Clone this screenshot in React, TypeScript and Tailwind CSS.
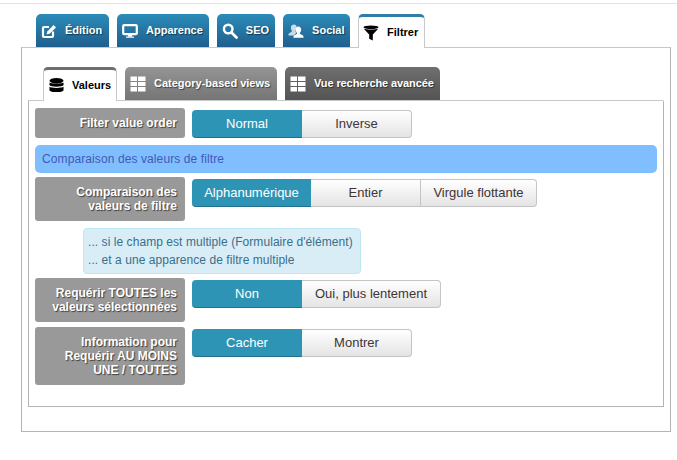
import type { ReactNode } from 'react';

function EditIcon() {
  return (
    <svg viewBox="0 0 16 16" className="h-[16px] w-[16px] shrink-0">
      <path d="M12 8.500V13a1 1 0 0 1-1 1H3a1 1 0 0 1-1-1V5a1 1 0 0 1 1-1h5" fill="none" stroke="currentColor" strokeWidth="2.2" />
      <path d="M5.500 11.500l.8-3L12.600 2l2.400 2.400-6.400 6.400z" fill="currentColor" />
    </svg>
  );
}

function MonitorIcon() {
  return (
    <svg viewBox="0 0 16 16" className="h-[16px] w-[16px] shrink-0">
      <rect x="1.200" y="2.200" width="13.600" height="9" rx="1" fill="none" stroke="currentColor" strokeWidth="2.2" />
      <rect x="6" y="12" width="4" height="1.600" fill="currentColor" />
      <rect x="4" y="13.400" width="8" height="1.400" rx="0.5" fill="currentColor" />
    </svg>
  );
}

function SearchIcon() {
  return (
    <svg viewBox="0 0 16 16" className="h-[16px] w-[16px] shrink-0">
      <circle cx="6.200" cy="6" r="4.300" fill="none" stroke="currentColor" strokeWidth="2.4" />
      <path d="M9.500 9.500l5 5" fill="none" stroke="currentColor" strokeWidth="2.8" strokeLinecap="round" />
    </svg>
  );
}

function SocialIcon() {
  return (
    <svg viewBox="0 0 16 16" className="h-[16px] w-[16px] shrink-0">
      <path d="M6 1.500c1.600 0 2.700 1.300 2.700 3 0 1.200-.5 2.300-1.200 2.900v1l1.400.7-3 3.400H.5v-1.400c0-1 2.800-1.800 3.300-2.700v-1C3.100 6.800 2.900 5.700 2.900 4.500c0-1.700 1.500-3 3.100-3z" fill="currentColor" opacity="0.75" />
      <path d="M10.300 3.500c1.700 0 2.900 1.400 2.900 3.100 0 1.200-.5 2.300-1.200 3v1.200c.6.9 3.500 1.300 3.500 2.600v1.300H5.500v-1.300c0-1.300 2.900-1.700 3.500-2.600V9.600c-.8-.7-1.300-1.800-1.300-3 0-1.700 1-3.100 2.600-3.100z" fill="currentColor" />
    </svg>
  );
}

function FilterIcon() {
  return (
    <svg viewBox="0 0 16 16" className="h-[16px] w-[16px] shrink-0">
      <ellipse cx="8" cy="2.200" rx="7.500" ry="1.700" fill="currentColor" />
      <path d="M0.800 3.800c1.500 1 13 1 14.400 0L9.800 9.600v5.800l-3.600-1.600V9.600z" fill="currentColor" />
    </svg>
  );
}

function DatabaseIcon() {
  return (
    <svg viewBox="0 0 16 16" className="h-[15px] w-[15px] shrink-0">
      <ellipse cx="8" cy="3" rx="7.500" ry="3" fill="currentColor" />
      <path d="M0.500 4.800c1.200 1.600 13.800 1.600 15 0v3c-1.200 2-13.800 2-15 0z" fill="currentColor" />
      <path d="M0.500 9.400c1.200 1.600 13.800 1.600 15 0V13c-1 2.700-14 2.700-15 0z" fill="currentColor" />
    </svg>
  );
}

function GridIcon() {
  return (
    <svg viewBox="0 0 16 16" className="h-[16px] w-[16px] shrink-0">
      <rect x="0.500" y="0.500" width="6.500" height="4.500" fill="currentColor" />
      <rect x="8" y="0.500" width="7.500" height="4.500" fill="currentColor" />
      <rect x="0.500" y="6" width="6.500" height="4" fill="currentColor" />
      <rect x="8" y="6" width="7.500" height="4" fill="currentColor" />
      <rect x="0.500" y="11" width="6.500" height="4.500" fill="currentColor" />
      <rect x="8" y="11" width="7.500" height="4.500" fill="currentColor" />
    </svg>
  );
}

function MainTab({ icon, label, active, className = '' }: { icon: ReactNode; label: string; active?: boolean; className?: string }) {
  return (
    <div
      className={
        active
          ? `relative z-10 -mb-px flex h-[34px] items-center gap-[8px] rounded-t-[5px] border border-b-0 border-[#c8c8c8] border-t-[3px] border-t-[#2f7ea8] bg-white pl-[4px] pr-[6px] text-black ${className}`
          : `flex h-[33px] items-center gap-[8px] rounded-t-[5px] bg-gradient-to-b from-[#2b8cb8] to-[#1f5f8e] pl-[5px] pr-[6px] text-white [text-shadow:1px_1px_1px_rgba(0,0,0,0.5)] ${className}`
      }
    >
      {icon}
      <span className="text-[11px] font-bold">{label}</span>
    </div>
  );
}

function SubTab({ icon, label, tone }: { icon: ReactNode; label: string; tone: 'active' | 'light' | 'dark' }) {
  const cls = {
    active: 'relative z-10 -mb-px h-[34px] w-[74px] border border-b-0 border-[#c8c8c8] border-t-[3px] border-t-[#6e6e6e] bg-white pl-[5px] text-black',
    light: 'h-[33px] w-[152px] bg-gradient-to-b from-[#959595] to-[#757575] pl-[5px] text-white [text-shadow:1px_1px_1px_rgba(0,0,0,0.5)]',
    dark: 'h-[33px] w-[155px] bg-gradient-to-b from-[#6f6f6f] to-[#545454] pl-[5px] tracking-[-0.1px] text-white [text-shadow:1px_1px_1px_rgba(0,0,0,0.5)]',
  }[tone];
  return (
    <div className={`flex items-center gap-[8px] rounded-t-[5px] ${cls}`}>
      {icon}
      <span className="text-[11px] font-bold">{label}</span>
    </div>
  );
}

function Label({ children, h }: { children: ReactNode; h: string }) {
  return (
    <div
      className={`${h} w-[150px] shrink-0 rounded-[3px] bg-[#999999] pr-[8px] pt-[8px] text-right text-[12px] font-bold leading-[14px] text-white [text-shadow:1px_1px_1px_rgba(0,0,0,0.6)]`}
    >
      {children}
    </div>
  );
}

function Toggle({ options, widths }: { options: string[]; widths: string[] }) {
  return (
    <div className="mt-[2px] flex h-[28px]">
      {options.map((o, i) => (
        <div
          key={o}
          className={
            i === 0
              ? `${widths[i]} flex items-center justify-center rounded-l-[4px] border-b border-[#22708c] bg-[#2e94b5] text-[13px] text-white`
              : `${widths[i]} flex items-center justify-center border border-l-0 border-[#c4c4c4] bg-gradient-to-b from-white to-[#e4e4e4] text-[13px] text-[#3f3535] ${i === options.length - 1 ? 'rounded-r-[4px]' : ''}`
          }
        >
          {o}
        </div>
      ))}
    </div>
  );
}

function Row({ label, h, options, widths, className = '' }: { label: ReactNode; h: string; options: string[]; widths: string[]; className?: string }) {
  return (
    <div className={`flex gap-[7px] ${className}`}>
      <Label h={h}>{label}</Label>
      <Toggle options={options} widths={widths} />
    </div>
  );
}

export default function App() {
  return (
    <div className="h-[460px] w-[677px] overflow-hidden bg-white pt-[3px] font-['Liberation_Sans',Arial,sans-serif]">
      <div className="h-px bg-[#e2e2e2]" />
      <div className="ml-[21px] mr-[6px] mt-[10px]">
        <div className="flex h-[33px] gap-[8px] pl-[15px]">
          <MainTab icon={<EditIcon />} label="Édition" className="w-[73px]" />
          <MainTab icon={<MonitorIcon />} label="Apparence" />
          <MainTab icon={<SearchIcon />} label="SEO" />
          <MainTab icon={<SocialIcon />} label="Social" className="w-[67px]" />
          <MainTab icon={<FilterIcon />} label="Filtrer" active />
        </div>
        <div className="h-[385px] border border-[#b4b4b4] border-t-[#c8c8c8] px-[6px] pt-[19px]">
          <div className="flex h-[33px] gap-[8px] pl-[15px]">
            <SubTab tone="active" icon={<DatabaseIcon />} label="Valeurs" />
            <SubTab tone="light" icon={<GridIcon />} label="Category-based views" />
            <SubTab tone="dark" icon={<GridIcon />} label="Vue recherche avancée" />
          </div>
          <div className="flex h-[307px] flex-col gap-[4px] rounded-tr-[2px] border border-[#b4b4b4] border-t-[#c8c8c8] px-[6px] pt-[7px]">
            <Row label="Filter value order" h="h-[30px]" options={['Normal', 'Inverse']} widths={['w-[110px]', 'w-[110px]']} />
            <div className="mt-[3px] flex h-[28px] shrink-0 items-center rounded-[5px] bg-[#7fbfff] px-[7px] text-[12px] tracking-[0.1px] text-[#4558b8]">
              Comparaison des valeurs de filtre
            </div>
            <Row
              label={<>Comparaison des<br />valeurs de filtre</>}
              h="h-[44px]"
              options={['Alphanumérique', 'Entier', 'Virgule flottante']}
              widths={['w-[119px]', 'w-[110px]', 'w-[116px]']}
            />
            <div className="ml-[48px] mt-[3px] flex h-[46px] w-[278px] shrink-0 flex-col justify-center rounded-[4px] border border-[#bce8f1] bg-[#d9edf7] px-[4px] text-[12px] leading-[18px] tracking-[0.06px] text-[#3a6f8a]">
              <div>... si le champ est multiple (Formulaire d'élément)</div>
              <div>... et a une apparence de filtre multiple</div>
            </div>
            <Row
              label={<>Requérir TOUTES les<br />valeurs sélectionnées</>}
              h="h-[44px]"
              options={['Non', 'Oui, plus lentement']}
              widths={['w-[110px]', 'w-[139px]']}
            />
            <Row
              label={<>Information pour<br />Requérir AU MOINS<br />UNE / TOUTES</>}
              h="h-[58px]"
              options={['Cacher', 'Montrer']}
              widths={['w-[110px]', 'w-[110px]']}
              className="mt-px"
            />
          </div>
        </div>
      </div>
    </div>
  );
}
